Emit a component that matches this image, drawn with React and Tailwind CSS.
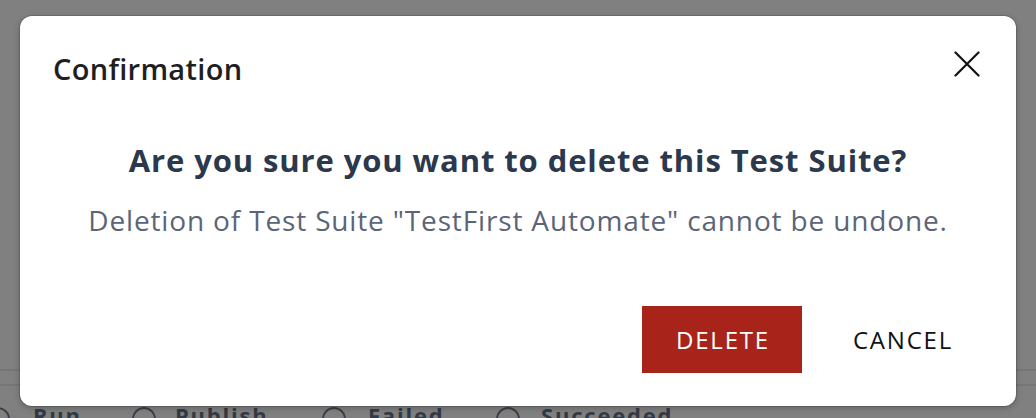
export default function App() {
  const filters = [
    { label: "Run", width: "w-[146px]", gap: "ml-[23px]" },
    { label: "Publish", width: "w-[190px]", gap: "ml-[19px]" },
    { label: "Failed", width: "w-[174px]", gap: "ml-[22px]" },
    { label: "Succeeded", width: "w-[200px]", gap: "ml-[21px]" },
  ];

  return (
    <div
      className="relative w-[1036px] h-[418px] overflow-hidden bg-[#808080]"
      style={{ fontFamily: '"Open Sans", "Liberation Sans", sans-serif' }}
    >
      {/* page behind the overlay */}
      <div className="pt-[369px]">
        <div className="h-[2px] bg-[#767676]" />
        <div className="h-[13px]" />
        <div className="h-[2px] bg-[#767676]" />
        <div className="flex items-start pt-[14px] -ml-[14px] text-[22px] leading-[30px] font-bold tracking-[1.8px] text-[#333a44]">
          {filters.map((f) => (
            <div key={f.label} className={`${f.width} shrink-0 flex items-start`}>
              <span className="mt-[7px] w-[24px] h-[24px] shrink-0 rounded-full border-2 border-[#3a3f48]" />
              <span className={f.gap}>{f.label}</span>
            </div>
          ))}
        </div>
      </div>

      {/* modal */}
      <div className="absolute inset-0 flex justify-center pt-[16px]">
        <div className="w-[996px] h-[390px] bg-white rounded-[12px] shadow-[0_0_0_1px_rgba(0,0,0,0.12),0_2px_6px_rgba(0,0,0,0.25)] flex flex-col">
          <div className="flex items-start justify-between pl-[33px] pr-[36px] pt-[33px]">
            <h2 className="text-[29px] leading-[40px] font-semibold text-[#1f1f1f] tracking-[0.3px]">
              Confirmation
            </h2>
            <button className="mt-[2px] w-[26px] h-[26px] flex items-center justify-center">
              <svg width="26" height="26" viewBox="0 0 26 26" fill="none">
                <path
                  d="M1.5 1.5 L24.5 24.5 M24.5 1.5 L1.5 24.5"
                  stroke="#111"
                  strokeWidth="2.2"
                  strokeLinecap="round"
                />
              </svg>
            </button>
          </div>

          <div className="flex flex-col items-center pt-[50px]">
            <p className="text-[31px] leading-[42px] font-bold text-[#2c384c] tracking-[0.9px]">
              Are you sure you want to delete this Test Suite?
            </p>
            <p className="mt-[20px] text-[28px] leading-[38px] text-[#5b6577] tracking-[0.85px]">
              Deletion of Test Suite "TestFirst Automate" cannot be undone.
            </p>
          </div>

          <div className="flex justify-end gap-[20px] pr-[34px] pt-[67px]">
            <button className="w-[160px] h-[67px] bg-[#a8231a] text-white text-[24px] tracking-[1.8px] pl-[2px]">
              DELETE
            </button>
            <button className="w-[160px] h-[67px] text-[#111] text-[24px] tracking-[1.8px] pl-[2px]">
              CANCEL
            </button>
          </div>
        </div>
      </div>
    </div>
  );
}
